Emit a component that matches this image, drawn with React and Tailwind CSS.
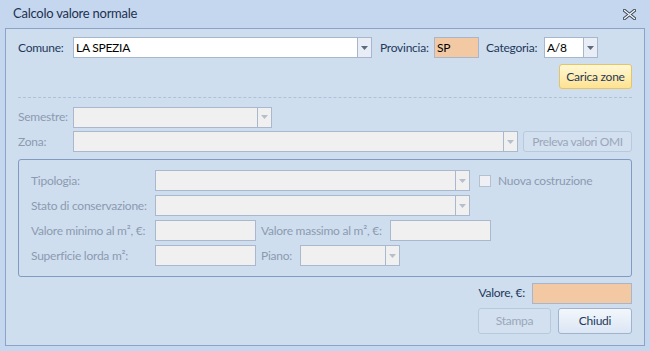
import React from 'react'

const font = { fontFamily: 'Lato, "Open Sans", sans-serif' }

function Arrow({ disabled }) {
  return (
    <svg width="7" height="4" viewBox="0 0 7 4">
      <path d="M0 0h7L3.5 4z" fill={disabled ? '#b4bfcd' : '#5d6b80'} />
    </svg>
  )
}

function Combo({ w, value, disabled }) {
  return (
    <div
      className={`flex h-[21px] border ${disabled ? 'border-[#a9b8cd] bg-[#f0f0f0]' : 'border-[#a5b6cd] bg-white'}`}
      style={{ width: w }}
    >
      <div className="flex-1 flex items-center pl-[2px] text-[12px] text-black">{value}</div>
      <div className={`w-[14px] flex items-center justify-center border-l ${disabled ? 'border-[#a9b8cd] bg-[#f0f0f0]' : 'border-[#a5b6cd] bg-[#e9eef6]'}`}>
        <Arrow disabled={disabled} />
      </div>
    </div>
  )
}

function Field({ w, peach, value }) {
  return (
    <div
      className={`h-[21px] border flex items-center pl-[2px] text-[12px] text-black ${peach ? 'bg-[#f3c9a3] border-[#a5b6cd]' : 'bg-[#f0f0f0] border-[#a9b8cd]'}`}
      style={{ width: w }}
    >
      {value}
    </div>
  )
}

export default function App() {
  return (
    <div className="w-[650px] h-[351px] bg-[#c5d7ee] overflow-hidden text-[12px] tracking-[-0.25px] whitespace-nowrap" style={font}>
      <div className="h-[28px] flex items-center justify-between pl-[13px] pr-[14px]">
        <span className="text-[13px] text-[#1e3150]">Calcolo valore normale</span>
        <svg width="13" height="11" viewBox="0 0 13 11">
          <path d="M1.5 1.5l10 8M11.5 1.5l-10 8" stroke="#3d4a5c" strokeWidth="3.4" strokeLinecap="round" />
          <path d="M1.5 1.5l10 8M11.5 1.5l-10 8" stroke="#f4f6fa" strokeWidth="1.4" strokeLinecap="round" />
        </svg>
      </div>

      <div className="mx-[5px] h-[318px] border border-[#8aa3c6] bg-[#cfdeef] px-[12px] pt-[8px] text-[#1e395b]">
        <div className="flex items-center h-[21px]">
          <span className="w-[55px]">Comune:</span>
          <Combo w={299} value="LA SPEZIA" />
          <span className="ml-[8px] w-[54px]">Provincia:</span>
          <Field w={45} peach value="SP" />
          <span className="ml-[7px] w-[58px]">Categoria:</span>
          <Combo w={54} value="A/8" />
        </div>

        <div className="flex justify-end mt-[6px]">
          <button className="w-[73px] h-[25px] rounded-[3px] border border-[#e3c466] bg-gradient-to-b from-[#fff8d4] to-[#ffe290] text-[12px] text-[#1e395b]">
            Carica zone
          </button>
        </div>

        <div className="mt-[8px] border-t border-dashed border-[#b0c0d6]" />

        <div className="flex items-center h-[20px] mt-[9px] text-[#8c9ab0]">
          <span className="w-[55px]">Semestre:</span>
          <Combo w={199} disabled />
        </div>

        <div className="flex items-center h-[21px] mt-[4px] text-[#8c9ab0]">
          <span className="w-[55px]">Zona:</span>
          <Combo w={445} disabled />
          <button className="ml-[5px] w-[109px] h-[21px] px-0 rounded-[3px] border border-[#b9c9dd] bg-[#d3e0ef] text-[12px] tracking-[-0.4px] text-[#9aa7ba]">
            Preleva valori OMI
          </button>
        </div>

        <div className="mt-[7px] h-[118px] rounded-[3px] border border-[#7f9bc2] px-[12px] pt-[10px] text-[#8c9ab0]">
          <div className="flex items-center h-[21px]">
            <span className="w-[124px]">Tipologia:</span>
            <Combo w={315} disabled />
            <div className="ml-[9px] w-[12px] h-[12px] border border-[#b3c0d1] bg-[#eef0f3]" />
            <span className="ml-[7px]">Nuova costruzione</span>
          </div>
          <div className="flex items-center h-[21px] mt-[4px]">
            <span className="w-[124px]">Stato di conservazione:</span>
            <Combo w={315} disabled />
          </div>
          <div className="flex items-center h-[21px] mt-[4px]">
            <span className="w-[124px]">Valore minimo al m², €:</span>
            <Field w={101} />
            <span className="ml-[5px] w-[129px]">Valore massimo al m², €:</span>
            <Field w={101} />
          </div>
          <div className="flex items-center h-[21px] mt-[4px]">
            <span className="w-[124px]">Superficie lorda m²:</span>
            <Field w={101} />
            <span className="ml-[5px] w-[39px]">Piano:</span>
            <Combo w={100} disabled />
          </div>
        </div>

        <div className="flex items-center justify-end h-[20px] mt-[6px]">
          <span className="mr-[7px]">Valore, €:</span>
          <Field w={100} peach />
        </div>

        <div className="flex justify-end gap-[7px] mt-[5px]">
          <button className="w-[73px] h-[26px] rounded-[3px] border border-[#b9c9dd] bg-[#d3e0ef] text-[12px] text-[#9aa7ba]">
            Stampa
          </button>
          <button className="w-[74px] h-[26px] rounded-[3px] border border-[#9fb3cf] bg-gradient-to-b from-[#f3f7fc] to-[#dbe6f4] text-[12px] text-[#1e395b]">
            Chiudi
          </button>
        </div>
      </div>
    </div>
  )
}
